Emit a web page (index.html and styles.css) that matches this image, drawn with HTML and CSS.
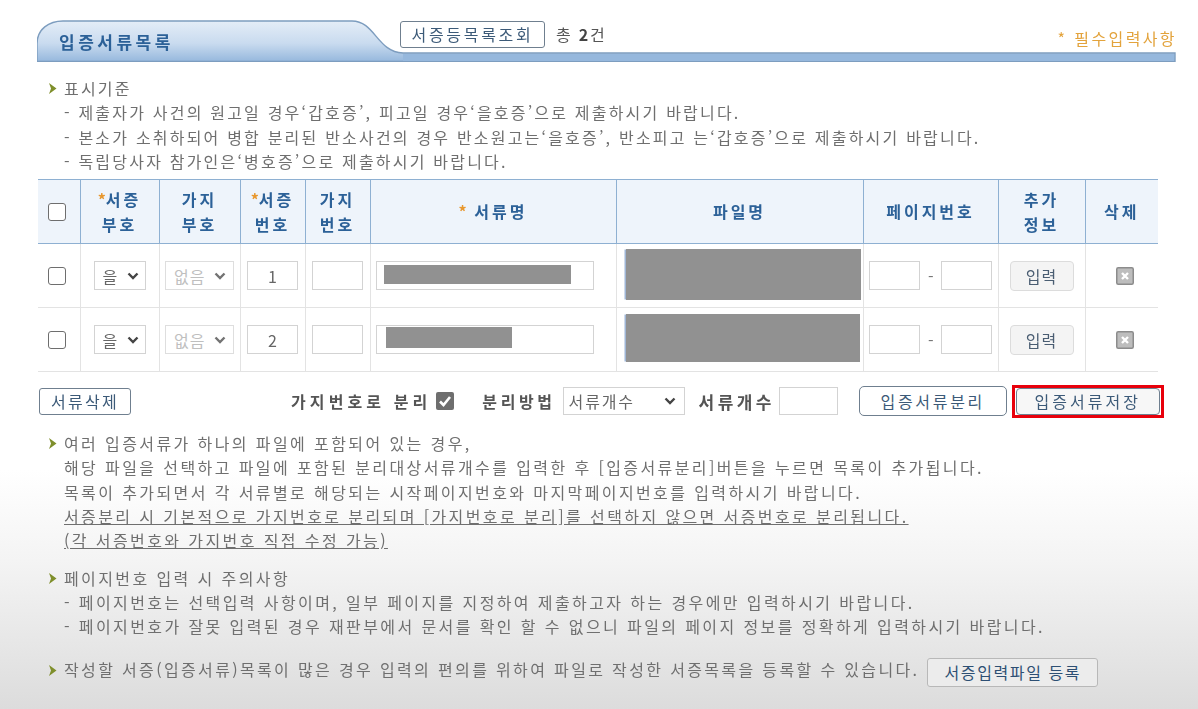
FILE: index.html
```html
<!DOCTYPE html>
<html lang="ko">
<head>
<meta charset="utf-8">
<title>입증서류목록</title>
<link rel="stylesheet" href="styles.css">
</head>
<body>
<main class="page">
  <header class="titlebar">
    <svg class="titlebar-bg" width="1140" height="42" viewBox="0 0 1140 42" aria-hidden="true">
      <defs>
        <linearGradient id="tabfill" x1="0" y1="0" x2="0" y2="1">
          <stop offset="0" stop-color="#e4edf7"/>
          <stop offset="0.55" stop-color="#c9dbef"/>
          <stop offset="1" stop-color="#96b8dd"/>
        </linearGradient>
      </defs>
      <path d="M0 41.5V24C0 9 12 1 26 1H315C338 1 340 32 366 33H1138V41.5Z" fill="url(#tabfill)" stroke="#7d9dbf" stroke-width="1.4"/>
      <rect x="366" y="34" width="771" height="7" fill="#96b8dd"/>
    </svg>
    <h1 class="tab-title">입증서류목록</h1>
    <button class="btn btn-lookup">서증등목록조회</button>
    <span class="total">총 <b>2</b>건</span>
    <span class="required">* 필수입력사항</span>
  </header>

  <section class="note note-first">
    <p class="note-head"><svg class="arrow" width="9" height="11" viewBox="0 0 9 11"><path d="M1 0L8.5 5.5L1 11L3 5.5Z" fill="#7f8f2c"/></svg>표시기준</p>
    <p>- 제출자가 사건의 원고일 경우‘갑호증’, 피고일 경우‘을호증’으로 제출하시기 바랍니다.</p>
    <p>- 본소가 소취하되어 병합 분리된 반소사건의 경우 반소원고는‘을호증’, 반소피고 는‘갑호증’으로 제출하시기 바랍니다.</p>
    <p>- 독립당사자 참가인은‘병호증’으로 제출하시기 바랍니다.</p>
  </section>

  <table class="grid">
    <colgroup>
      <col class="c1"><col class="c2"><col class="c3"><col class="c4"><col class="c5"><col class="c6"><col class="c7"><col class="c8"><col class="c9"><col class="c10">
    </colgroup>
    <thead>
      <tr>
        <th><input type="checkbox" class="check"></th>
        <th><i>*</i>서증<br>부호</th>
        <th>가지<br>부호</th>
        <th><i>*</i>서증<br>번호</th>
        <th>가지<br>번호</th>
        <th><i>*</i> 서류명</th>
        <th>파일명</th>
        <th>페이지번호</th>
        <th>추가<br>정보</th>
        <th>삭제</th>
      </tr>
    </thead>
    <tbody>
      <tr>
        <td><input type="checkbox" class="check"></td>
        <td><select class="sel sel-code"><option>을</option></select></td>
        <td><select class="sel sel-branch" disabled><option>없음</option></select></td>
        <td><input class="field field-num" value="1"></td>
        <td><input class="field field-num"></td>
        <td><div class="name-wrap"><input class="field field-name"><span class="mask mask-name1"></span></div></td>
        <td class="file-cell"><span class="mask-file mask-file1"></span></td>
        <td><div class="pages"><input class="field field-page"><span>-</span><input class="field field-page"></div></td>
        <td><button class="btn-input">입력</button></td>
        <td class="del-cell"><svg class="del" width="18" height="18" viewBox="0 0 18 18"><rect x="0.75" y="0.75" width="16.5" height="16.5" rx="1.5" fill="#bdbdbd" stroke="#8c8c8c" stroke-width="1.5"/><path d="M6 6L12 12M12 6L6 12" stroke="#fff" stroke-width="2.4"/></svg></td>
      </tr>
      <tr>
        <td><input type="checkbox" class="check"></td>
        <td><select class="sel sel-code"><option>을</option></select></td>
        <td><select class="sel sel-branch" disabled><option>없음</option></select></td>
        <td><input class="field field-num" value="2"></td>
        <td><input class="field field-num"></td>
        <td><div class="name-wrap"><input class="field field-name"><span class="mask mask-name2"></span></div></td>
        <td class="file-cell"><span class="mask-file mask-file2"></span></td>
        <td><div class="pages"><input class="field field-page"><span>-</span><input class="field field-page"></div></td>
        <td><button class="btn-input">입력</button></td>
        <td class="del-cell"><svg class="del" width="18" height="18" viewBox="0 0 18 18"><rect x="0.75" y="0.75" width="16.5" height="16.5" rx="1.5" fill="#bdbdbd" stroke="#8c8c8c" stroke-width="1.5"/><path d="M6 6L12 12M12 6L6 12" stroke="#fff" stroke-width="2.4"/></svg></td>
      </tr>
    </tbody>
  </table>

  <div class="actions">
    <button class="btn btn-del">서류삭제</button>
    <b class="lbl lbl-split">가지번호로 분리</b>
    <svg class="checked" width="18" height="18" viewBox="0 0 18 18"><rect width="18" height="18" rx="2" fill="#6e6e6e"/><path d="M4 9.5L7.5 13L14 5" fill="none" stroke="#fff" stroke-width="2.6"/></svg>
    <b class="lbl lbl-method">분리방법</b>
    <select class="sel sel-method"><option>서류개수</option></select>
    <b class="lbl lbl-count">서류개수</b>
    <input class="field field-count">
    <button class="btn btn-split">입증서류분리</button>
    <span class="highlight"><button class="btn btn-save">입증서류저장</button></span>
  </div>

  <section class="note note-wide note-second">
    <p class="note-head"><svg class="arrow" width="9" height="11" viewBox="0 0 9 11"><path d="M1 0L8.5 5.5L1 11L3 5.5Z" fill="#7f8f2c"/></svg>여러 입증서류가 하나의 파일에 포함되어 있는 경우,</p>
    <p>해당 파일을 선택하고 파일에 포함된 분리대상서류개수를 입력한 후 [입증서류분리]버튼을 누르면 목록이 추가됩니다.</p>
    <p>목록이 추가되면서 각 서류별로 해당되는 시작페이지번호와 마지막페이지번호를 입력하시기 바랍니다.</p>
    <p><u>서증분리 시 기본적으로 가지번호로 분리되며 [가지번호로 분리]를 선택하지 않으면 서증번호로 분리됩니다.</u></p>
    <p><u>(각 서증번호와 가지번호 직접 수정 가능)</u></p>
  </section>

  <section class="note note-wide note-third">
    <p class="note-head"><svg class="arrow" width="9" height="11" viewBox="0 0 9 11"><path d="M1 0L8.5 5.5L1 11L3 5.5Z" fill="#7f8f2c"/></svg>페이지번호 입력 시 주의사항</p>
    <p>- 페이지번호는 선택입력 사항이며, 일부 페이지를 지정하여 제출하고자 하는 경우에만 입력하시기 바랍니다.</p>
    <p>- 페이지번호가 잘못 입력된 경우 재판부에서 문서를 확인 할 수 없으니 파일의 페이지 정보를 정확하게 입력하시기 바랍니다.</p>
  </section>

  <section class="note note-wide note-fourth">
    <p class="note-head"><svg class="arrow" width="9" height="11" viewBox="0 0 9 11"><path d="M1 0L8.5 5.5L1 11L3 5.5Z" fill="#7f8f2c"/></svg>작성할 서증(입증서류)목록이 많은 경우 입력의 편의를 위하여 파일로 작성한 서증목록을 등록할 수 있습니다.<button class="btn btn-file">서증입력파일 등록</button></p>
  </section>
</main>
</body>
</html>
```

FILE: styles.css
```css
* { box-sizing: border-box; }
html, body { margin: 0; height: 100%; }
body {
  height: 709px;
  overflow: hidden;
  background: linear-gradient(180deg, #fff 0, #fff 470px, #f4f4f4 560px, #e4e4e4 660px, #dcdcdc 709px);
  font-family: "Noto Sans CJK KR", "Noto Sans", sans-serif;
  color: #6f6f6f;
  font-size: 16px;
}
.page { padding: 20px 0 0 37px; width: 1198px; filter: blur(0.35px); }
p { margin: 0; }

.titlebar { position: relative; display: flex; align-items: center; height: 42px; width: 1140px; }
.titlebar-bg { position: absolute; left: 0; top: 0; }
.tab-title { position: relative; margin: 2px 0 0 22px; width: 341px; font-size: 17px; letter-spacing: 3.5px; font-weight: 700; color: #2c6198; line-height: 40px; height: 40px; }
.btn {
  position: relative;
  font-family: inherit;
  background: #fff;
  border: 1px solid #6f7f8f;
  border-radius: 3px;
  color: #3c5a78;
  padding: 0;
  font-size: 16px;
  letter-spacing: 2.3px;
  line-height: 1;
}
.btn-lookup { width: 145px; height: 27px; margin-top: -14px; letter-spacing: 2.7px; }
.total { position: relative; margin: -14px 0 0 11px; color: #555; font-size: 16px; letter-spacing: 1.8px; }
.total b { color: #444; }
.required { position: absolute; right: 0; top: 6px; color: #e3a33c; font-size: 16px; letter-spacing: 2.4px; line-height: 24px; white-space: nowrap; }

.note p { line-height: 24.3px; padding-left: 27px; letter-spacing: 2.2px; white-space: nowrap; }
.note-wide p { letter-spacing: 2.4px; }
.note p.note-head { position: relative; }
.arrow { position: absolute; left: 11px; top: 7px; }
.note-first { margin-top: 14px; height: 98px; }
.note-second { margin-top: 1px; }
.note-third { margin-top: 14px; }
.note-third p { line-height: 24px; }
.note-fourth { margin-top: 19px; }
.note-fourth p { letter-spacing: 2.35px; }
.note-fourth .arrow { top: 8px; }

.grid { table-layout: fixed; width: 1120px; margin-left: 1px; border-collapse: collapse; margin-top: 5px; }
.c1 { width: 42px; } .c2 { width: 79px; } .c3 { width: 81px; } .c4 { width: 65px; } .c5 { width: 65px; }
.c6 { width: 246px; } .c7 { width: 247px; } .c8 { width: 135px; } .c9 { width: 87px; } .c10 { width: 73px; }
.grid th {
  height: 64px;
  background: #eef4fb;
  border-top: 1px solid #8eb0d2;
  border-bottom: 1px solid #8eb0d2;
  border-left: 1px solid #8eb0d2;
  color: #2c6198;
  font-size: 16px;
  letter-spacing: 3px;
  line-height: 25px;
  padding: 0;
  font-weight: 700;
  text-align: center;
}
.grid th:first-child, .grid td:first-child { border-left: 0; padding-right: 4px; }
.grid th i { font-style: normal; color: #e8982f; letter-spacing: 0; }
.grid td {
  height: 64px;
  padding: 0;
  text-align: center;
  border-bottom: 1px solid #e3e3e3;
  border-left: 1px solid #e3e3e3;
}
.check {
  appearance: none;
  -webkit-appearance: none;
  display: block;
  margin: 0 auto;
  width: 18px;
  height: 18px;
  background: #fff;
  border: 1.5px solid #6e6e6e;
  border-radius: 3px;
}
.sel {
  appearance: none;
  -webkit-appearance: none;
  font-family: inherit;
  font-size: 16px;
  height: 29px;
  border: 1px solid #d3d3d3;
  border-radius: 0;
  background-color: #fff;
  background-image: url("data:image/svg+xml,%3Csvg xmlns='http://www.w3.org/2000/svg' width='12' height='8' viewBox='0 0 12 8'%3E%3Cpath d='M1.5 1.5L6 6L10.5 1.5' fill='none' stroke='%23444' stroke-width='2.4'/%3E%3C/svg%3E");
  background-repeat: no-repeat;
  color: #666;
  padding: 0 0 0 8px;
  letter-spacing: 1px;
  display: block;
  margin: 0 auto;
}
.sel-code { width: 52px; background-position: right 6px center; }
.sel-branch { width: 69px; color: #aaa; background-position: right 7px center; opacity: 0.75; }
.sel-method { width: 122px; height: 28px; margin: 0; padding-left: 5px; letter-spacing: 1.8px; background-position: right 8px center; }
.field {
  font-family: inherit;
  font-size: 16px;
  height: 29px;
  border: 1px solid #d3d3d3;
  background: #fff;
  padding: 0;
  text-align: center;
  color: #666;
  display: block;
  margin: 0 auto;
  outline: none;
}
.field-num { width: 51px; }
.name-wrap { position: relative; width: 218px; margin-left: 5px; }
.field-name { width: 218px; }
.mask { position: absolute; background: #919191; }
.mask-name1 { left: 8px; top: 4px; width: 187px; height: 19px; }
.mask-name2 { left: 10px; top: 2px; width: 126px; height: 21px; }
.mask-file { display: block; background: #919191; margin-left: 9px; box-shadow: -2px 0 0 -0.5px #9fb6d6; }
.mask-file1 { width: 235px; height: 51px; margin-bottom: 2px; }
.mask-file2 { width: 234px; height: 48px; margin-bottom: 4px; }
.pages { display: flex; align-items: center; justify-content: center; gap: 8px; }
.pages span { width: 5px; color: #777; line-height: 20px; }
.field-page { width: 51px; margin: 0; }
.btn-input {
  font-family: inherit;
  width: 64px;
  height: 30px;
  background: #f4f4f4;
  border: 1px solid #dcdcdc;
  border-radius: 4px;
  color: #4a5d72;
  font-size: 16px;
  letter-spacing: 1px;
  padding: 0;
  display: block;
  margin: 0 auto;
}
.del-cell { padding-left: 6px !important; }
.del { display: block; margin: 0 auto; }

.actions { display: flex; align-items: center; height: 58px; margin-left: 2px; }
.lbl { color: #555; font-size: 16px; letter-spacing: 3px; white-space: nowrap; font-weight: 700; }
.btn-del { width: 92px; height: 27px; }
.lbl-split { margin-left: 160px; letter-spacing: 4.1px; }
.checked { margin-left: 5px; flex: none; }
.lbl-method { margin-left: 28px; letter-spacing: 3.6px; }
.sel-method { margin-left: 7px; }
.lbl-count { margin-left: 14px; font-size: 17px; letter-spacing: 3.4px; }
.field-count { width: 59px; height: 28px; margin: 0 0 0 4px; }
.btn-split { width: 148px; height: 30px; margin-left: 21px; border-radius: 5px; letter-spacing: 2.7px; }
.highlight { display: block; border: 3px solid #e8000b; margin-left: 5px; padding: 0 1px; height: 33px; }
.btn-save { width: 144px; height: 27px; display: block; background: #f7f7f7; border-radius: 4px; letter-spacing: 3px; }
.btn-file { width: 171px; height: 29px; margin-left: 8px; background: #ececec; border-color: #b8b8b8; color: #2d4f73; letter-spacing: 1.6px; vertical-align: -3px; }
```
